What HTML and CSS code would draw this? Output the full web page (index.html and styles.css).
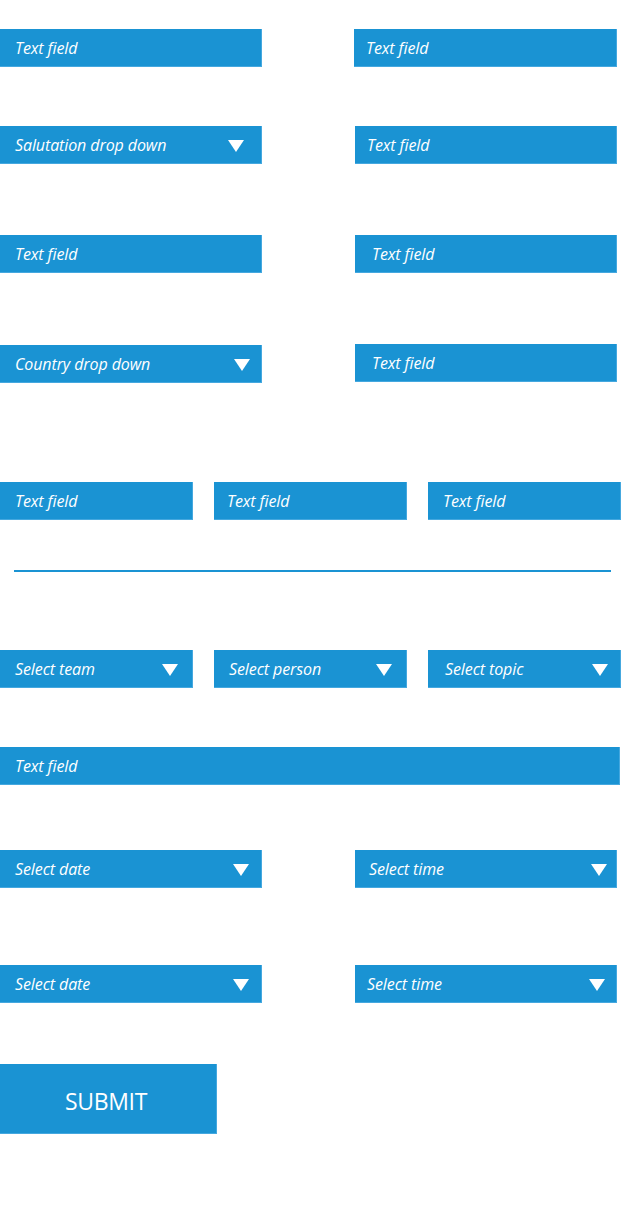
FILE: index.html
```html
<!DOCTYPE html>
<html lang="en">
<head>
<meta charset="utf-8">
<title>Form mockup</title>
<link rel="stylesheet" href="styles.css">
</head>
<body>
<main class="form">
  <div class="row two r1">
    <div class="field">Text field</div>
    <div class="field in-12 shift-left">Text field</div>
  </div>
  <div class="row two r2">
    <div class="field drop pr-17">Salutation drop down<span class="arrow"></span></div>
    <div class="field in-12">Text field</div>
  </div>
  <div class="row two r3">
    <div class="field">Text field</div>
    <div class="field in-17">Text field</div>
  </div>
  <div class="row two r4">
    <div class="field drop down-1 pr-11">Country drop down<span class="arrow"></span></div>
    <div class="field in-17">Text field</div>
  </div>
  <div class="row three r5">
    <div class="field">Text field</div>
    <div class="field in-13">Text field</div>
    <div class="field">Text field</div>
  </div>
  <hr class="divider">
  <div class="row three r6">
    <div class="field drop pr-14">Select team<span class="arrow"></span></div>
    <div class="field drop pr-14">Select person<span class="arrow"></span></div>
    <div class="field drop in-17">Select topic<span class="arrow"></span></div>
  </div>
  <div class="row one r7">
    <div class="field">Text field</div>
  </div>
  <div class="row two r8">
    <div class="field drop">Select date<span class="arrow"></span></div>
    <div class="field drop in-14 pr-9">Select time<span class="arrow"></span></div>
  </div>
  <div class="row two r9">
    <div class="field drop">Select date<span class="arrow"></span></div>
    <div class="field drop in-12 pr-11">Select time<span class="arrow"></span></div>
  </div>
  <button class="submit" type="button">SUBMIT</button>
</main>
</body>
</html>
```

FILE: styles.css
```css
html, body {
  margin: 0;
  padding: 0;
  background: #ffffff;
}

.form {
  width: 621px;
  padding-top: 29px;
  display: flex;
  flex-direction: column;
  align-items: flex-start;
}

.row {
  display: grid;
  align-items: start;
}

.two {
  grid-template-columns: 262px 262px;
  column-gap: 93px;
}

.three {
  grid-template-columns: 193px 193px 193px;
  column-gap: 21px;
}

.one {
  grid-template-columns: 620px;
}

.r2 { margin-top: 59px; }
.r3 { margin-top: 71px; }
.r4 { margin-top: 71px; }
.r5 { margin-top: 99px; }
.r6 { margin-top: 78px; }
.r7 { margin-top: 59px; }
.r8 { margin-top: 65px; }
.r9 { margin-top: 77px; }

.field {
  box-sizing: border-box;
  height: 38px;
  display: flex;
  align-items: center;
  justify-content: space-between;
  padding: 0 12px 0 15px;
  background: #1a93d3;
  border-right: 1px solid #45a8df;
  border-bottom: 1px solid #45a8df;
  color: #ffffff;
  font-family: "Open Sans", "Liberation Sans", sans-serif;
  font-style: italic;
  font-size: 16px;
  letter-spacing: -0.1px;
  white-space: nowrap;
}

.shift-left { margin-left: -1px; }
.down-1 { margin-top: 1px; }

.in-12 { padding-left: 12px; }
.in-13 { padding-left: 13px; }
.in-14 { padding-left: 14px; }
.in-17 { padding-left: 17px; }

.pr-9 { padding-right: 9px; }
.pr-11 { padding-right: 11px; }
.pr-14 { padding-right: 14px; }
.pr-17 { padding-right: 17px; }

.arrow {
  width: 0;
  height: 0;
  border-left: 8px solid transparent;
  border-right: 8px solid transparent;
  border-top: 12px solid #ffffff;
  margin-top: 2px;
}

.divider {
  box-sizing: border-box;
  width: 597px;
  height: 2px;
  margin: 50px 0 0 14px;
  border: 0;
  background: #1a93d3;
}

.submit {
  box-sizing: border-box;
  margin-top: 61px;
  width: 217px;
  height: 70px;
  padding: 4px 4px 0 0;
  border: 0;
  border-right: 1px solid #45a8df;
  border-bottom: 1px solid #45a8df;
  background: #1a93d3;
  color: #ffffff;
  font-family: "Open Sans", "Liberation Sans", sans-serif;
  font-size: 23px;
  letter-spacing: -0.3px;
}
```
